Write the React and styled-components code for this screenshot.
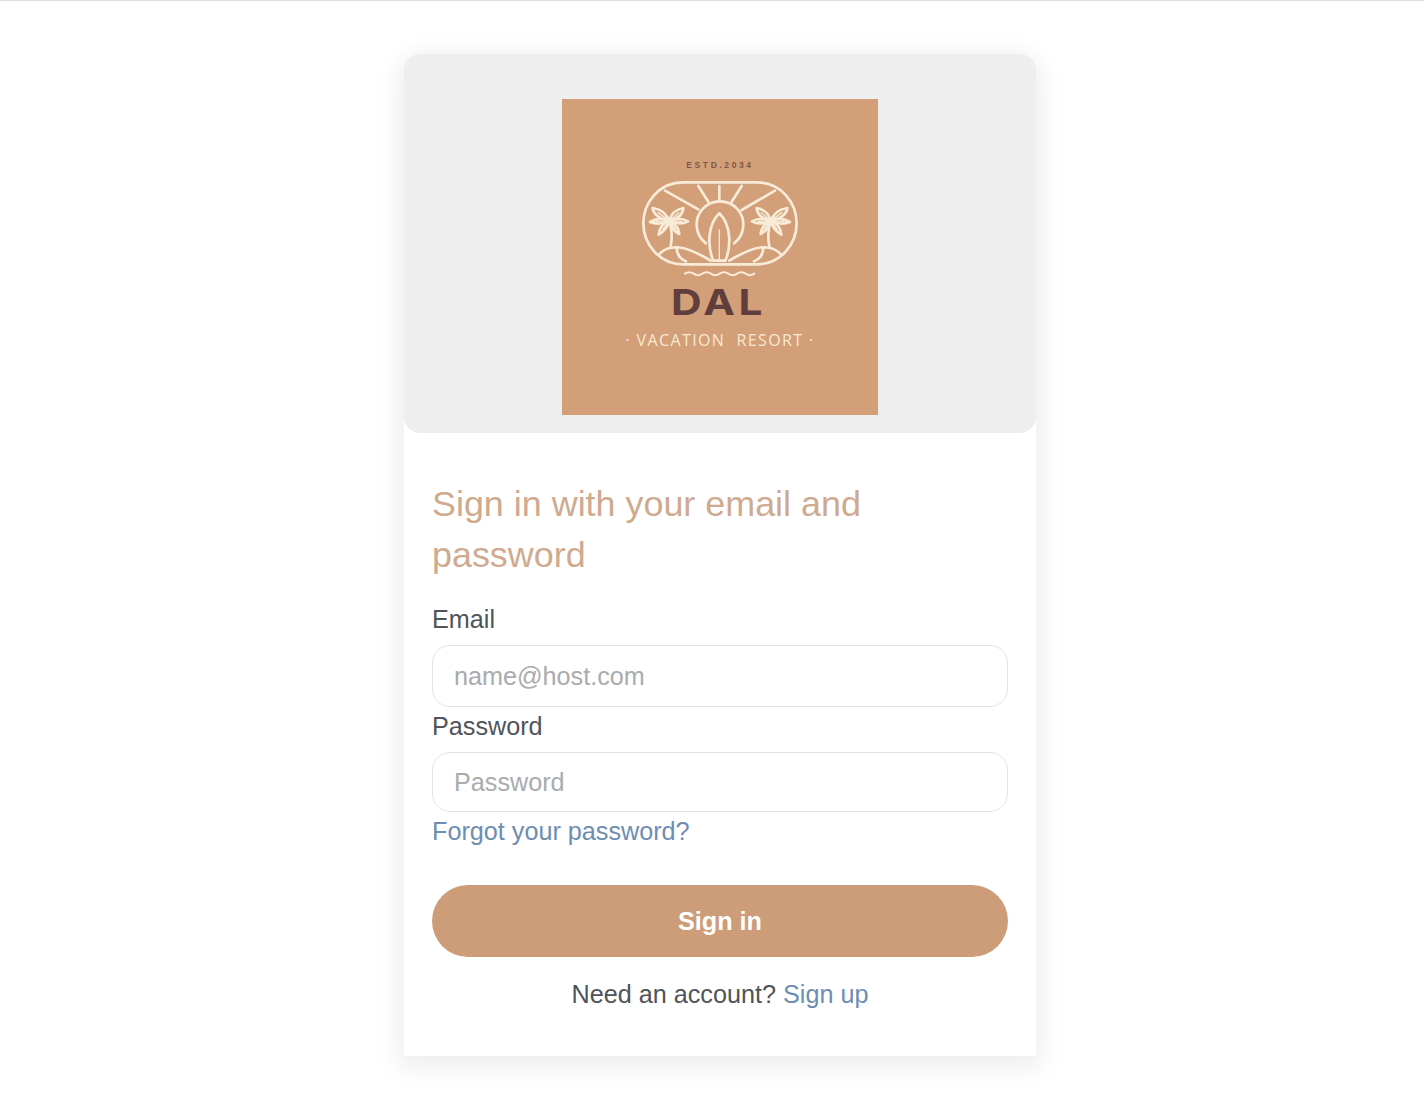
import React from 'react';
import styled, { createGlobalStyle } from 'styled-components';

const GlobalStyle = createGlobalStyle`
  html, body {
    margin: 0;
    padding: 0;
    background: #ffffff;
  }
  * {
    box-sizing: border-box;
  }
`

const Page = styled.div`
  height: 1100px;
  border-top: 1px solid #dcdcdc;
  padding-top: 53px;
  display: flex;
  justify-content: center;
  font-family: 'Liberation Sans', Arial, sans-serif;
  overflow: hidden;
`
const Card = styled.div`
  width: 632px;
  height: 1002px;
  margin-left: 16px;
  background: #ffffff;
  border-radius: 16px 16px 0 0;
  box-shadow: 0 6px 24px 6px rgba(0, 0, 0, 0.07);
`
const Header = styled.div`
  height: 379px;
  background: #eeeeee;
  border-radius: 16px;
  padding-top: 45px;
  display: flex;
  justify-content: center;
`
const Logo = styled.svg`
  display: block;
  width: 316px;
  height: 316px;
`
const Body = styled.div`
  padding: 46px 28px 0;
`
const Title = styled.h1`
  margin: 0 0 19px;
  width: 480px;
  font-size: 35.9px;
  line-height: 51px;
  font-weight: 400;
  color: #cfaa8f;
`
const Field = styled.div`
  display: flex;
  flex-direction: column;
`
const Label = styled.label`
  font-size: 25.2px;
  line-height: 38px;
  color: #4f5459;
  margin-bottom: 7px;
`
const Input = styled.input`
  width: 576px;
  height: ${props => props.$h}px;
  border: 1px solid #e2e3e4;
  border-radius: 18px;
  padding: 0 21px;
  background: #ffffff;
  font-family: inherit;
  font-size: 25.2px;
  color: #4f5459;
  outline: none;
  &::placeholder {
    color: #a9abad;
    opacity: 1;
  }
`
const Link = styled.a`
  color: #6d8db3;
  text-decoration: none;
  cursor: pointer;
`
const Forgot = styled.div`
  font-size: 25.2px;
  line-height: 38px;
`
const SubmitButton = styled.button`
  display: block;
  width: 576px;
  height: 72px;
  margin-top: 35px;
  border: none;
  border-radius: 36px;
  background: #cd9d79;
  color: #ffffff;
  font-family: inherit;
  font-size: 25.2px;
  font-weight: 700;
`
const Footer = styled.div`
  margin-top: 18px;
  text-align: center;
  font-size: 25.2px;
  line-height: 38px;
  color: #4f5459;
`

// palm tree drawn around its crown, mirrored by the caller through the x scale
const Palm = ({ x, flip }) => (
  <g transform={`translate(${x} 212) scale(${flip ? -1 : 1} 1)`}>
    <path d="M0 0 C-10 -22 -25 -35 -50 -38 C-48 -20 -30 -5 0 0Z" />
    <path d="M0 0 C5 -20 15 -32 42 -38 C40 -18 25 -5 0 0Z" />
    <path d="M0 0 C-20 -8 -38 -8 -58 4 C-38 12 -20 10 0 0Z" />
    <path d="M0 0 C20 -8 38 -8 56 2 C38 12 20 10 0 0Z" />
    <path d="M0 0 C-18 6 -30 22 -32 42 C-15 32 -5 18 0 0Z" />
    <path d="M0 0 C16 8 28 22 30 40 C14 32 4 18 0 0Z" />
    <path d="M0 0 L-34 -24 M0 0 L28 -24 M0 0 L-40 3 M0 0 L38 2 M0 0 L-20 26 M0 0 L20 26" strokeWidth="4" />
    <path d="M0 2 C8 28 10 50 4 76" />
  </g>
)

const ResortLogo = () => (
  <Logo viewBox="0 0 316 316">
    <rect width="316" height="316" fill="#d29f79" />
    <g transform="translate(58 51) scale(0.3333)" fill="none" stroke="#f8ecd9" strokeWidth="8" strokeLinecap="round" strokeLinejoin="round">
      <path d="M190 97 H410 C485 97 530 160 530 220 C530 285 480 343 410 343 H190 C120 343 70 285 70 220 C70 160 115 97 190 97Z" />
      <path d="M135 122 L235 178 M235 108 L265 155 M298 108 V148 M365 108 L335 155 M465 122 L365 180" />
      <path d="M258 280 A70 70 0 1 1 342 280" />
      <path d="M298 190 C262 225 262 290 280 332 H316 C334 290 334 225 298 190Z" />
      <path d="M298 240 V332" strokeWidth="4" />
      <path d="M118 312 C150 280 195 285 272 332 M482 312 C450 280 405 285 328 332 M170 292 C170 312 178 326 198 334 M430 292 C430 312 422 326 402 334" />
      <Palm x={148} />
      <Palm x={452} flip />
      <path d="M195 371 q13 -9 26 0 t26 0 t26 0 t26 0 t26 0 t26 0 t26 0 t26 0" strokeWidth="6" />
    </g>
    <text x="158" y="69" textAnchor="middle" fontFamily="'Liberation Sans', sans-serif" fontSize="8.5" fontWeight="700" letterSpacing="2.6" fill="#7c5648">ESTD.2034</text>
    <text x="109" y="216" textLength="95" lengthAdjust="spacingAndGlyphs" fontFamily="Inter, sans-serif" fontSize="36" fontWeight="700" letterSpacing="3" fill="#603e3c">DAL</text>
    <text x="158" y="247" textAnchor="middle" fontFamily="'Open Sans', sans-serif" fontSize="16" fontWeight="400" letterSpacing="1.4" fill="#f8e8d2" xmlSpace="preserve">· VACATION  RESORT ·</text>
  </Logo>
)

export default class App extends React.Component {
  render() {
    return (
      <Page>
        <GlobalStyle />
        <Card>
          <Header>
            <ResortLogo />
          </Header>
          <Body>
            <Title>Sign in with your email and password</Title>
            <Field>
              <Label>Email</Label>
              <Input $h={62} placeholder="name@host.com" />
            </Field>
            <Field>
              <Label>Password</Label>
              <Input $h={60} type="password" placeholder="Password" />
            </Field>
            <Forgot>
              <Link>Forgot your password?</Link>
            </Forgot>
            <SubmitButton>Sign in</SubmitButton>
            <Footer>
              Need an account? <Link>Sign up</Link>
            </Footer>
          </Body>
        </Card>
      </Page>
    )
  }
}
